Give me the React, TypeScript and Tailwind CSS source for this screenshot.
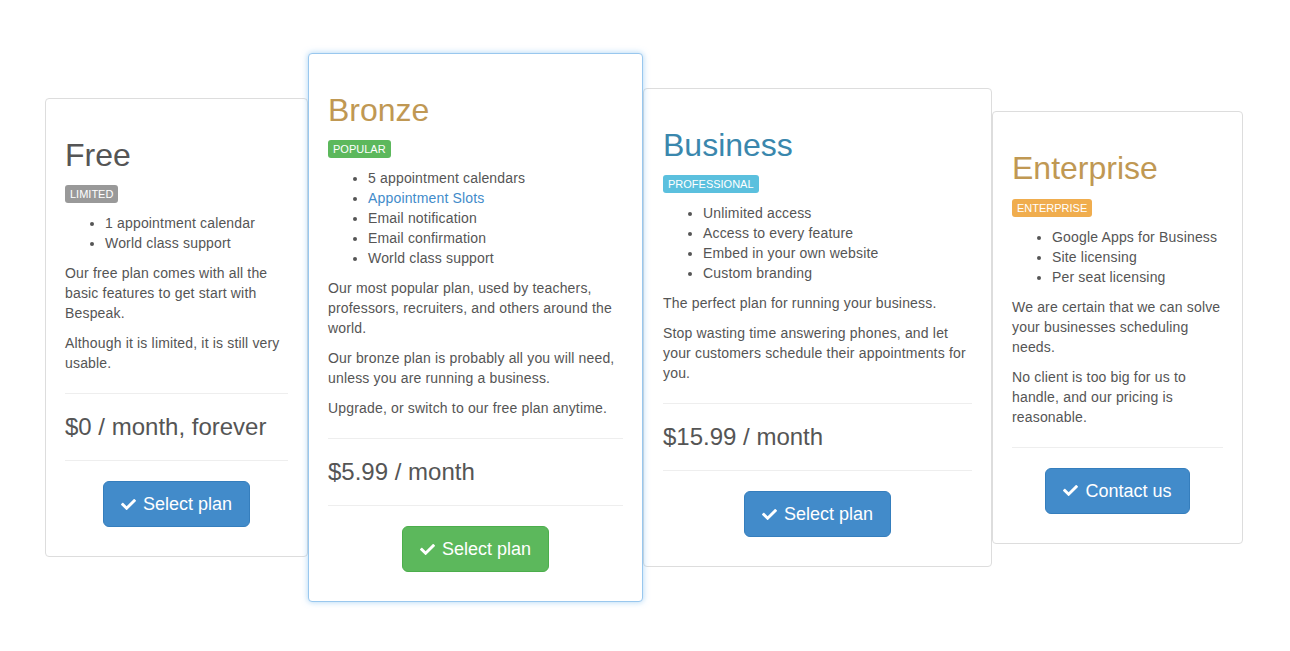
import { FaCheck } from "react-icons/fa";
import type { ReactNode } from "react";

type Plan = {
  name: string;
  titleColor: string;
  badge: string;
  badgeColor: string;
  features: ReactNode[];
  paragraphs: string[];
  price?: string;
  button: string;
  buttonColor: string;
  width: string;
  highlight?: boolean;
};

const plans: Plan[] = [
  {
    name: "Free",
    titleColor: "text-[#555]",
    badge: "Limited",
    badgeColor: "bg-[#999]",
    features: ["1 appointment calendar", "World class support"],
    paragraphs: [
      "Our free plan comes with all the basic features to get start with Bespeak.",
      "Although it is limited, it is still very usable.",
    ],
    price: "$0 / month, forever",
    button: "Select plan",
    buttonColor: "bg-[#428bca] border-[#357ebd]",
    width: "w-[263px]",
  },
  {
    name: "Bronze",
    titleColor: "text-[#c09853]",
    badge: "Popular",
    badgeColor: "bg-[#5cb85c]",
    features: [
      "5 appointment calendars",
      <a href="#" className="text-[#428bca]">
        Appointment Slots
      </a>,
      "Email notification",
      "Email confirmation",
      "World class support",
    ],
    paragraphs: [
      "Our most popular plan, used by teachers, professors, recruiters, and others around the world.",
      "Our bronze plan is probably all you will need, unless you are running a business.",
      "Upgrade, or switch to our free plan anytime.",
    ],
    price: "$5.99 / month",
    button: "Select plan",
    buttonColor: "bg-[#5cb85c] border-[#4cae4c]",
    width: "w-[335px]",
    highlight: true,
  },
  {
    name: "Business",
    titleColor: "text-[#3a87ad]",
    badge: "Professional",
    badgeColor: "bg-[#5bc0de]",
    features: [
      "Unlimited access",
      "Access to every feature",
      "Embed in your own website",
      "Custom branding",
    ],
    paragraphs: [
      "The perfect plan for running your business.",
      "Stop wasting time answering phones, and let your customers schedule their appointments for you.",
    ],
    price: "$15.99 / month",
    button: "Select plan",
    buttonColor: "bg-[#428bca] border-[#357ebd]",
    width: "w-[349px]",
  },
  {
    name: "Enterprise",
    titleColor: "text-[#c09853]",
    badge: "Enterprise",
    badgeColor: "bg-[#f0ad4e]",
    features: ["Google Apps for Business", "Site licensing", "Per seat licensing"],
    paragraphs: [
      "We are certain that we can solve your businesses scheduling needs.",
      "No client is too big for us to handle, and our pricing is reasonable.",
    ],
    button: "Contact us",
    buttonColor: "bg-[#428bca] border-[#357ebd]",
    width: "w-[251px]",
  },
];

const PlanCard = ({ plan }: { plan: Plan }) => {
  return (
    <div
      className={`${plan.width} shrink-0 bg-white rounded-[4px] border px-[19px] pt-[19px] pb-[19px] ${
        plan.highlight
          ? "relative z-10 border-[#99c7ee] shadow-[0_0_6px_rgba(102,175,233,0.55)]"
          : "border-[#ddd]"
      }`}
    >
      <h1
        className={`mt-5 mb-[10px] text-[32px] leading-[1.1] tracking-normal ${plan.titleColor}`}
      >
        {plan.name}
      </h1>
      <div className="h-5 mb-[10px] flex items-end">
        <span
          className={`${plan.badgeColor} text-white uppercase text-[11px] leading-[18px] h-[18px] px-[5px] rounded-[3px] tracking-normal`}
        >
          {plan.badge}
        </span>
      </div>
      <ul className="list-disc pl-10 mb-[10px]">
        {plan.features.map((f, i) => (
          <li key={i}>{f}</li>
        ))}
      </ul>
      {plan.paragraphs.map((p, i) => (
        <p key={i} className="mb-[10px]">
          {p}
        </p>
      ))}
      <hr className="my-5 border-t border-[#eee]" />
      {plan.price && (
        <>
          <h3 className="mt-5 mb-[10px] text-[24px] leading-[1.1] tracking-normal">
            {plan.price}
          </h3>
          <hr className="my-5 border-t border-[#eee]" />
        </>
      )}
      <div className="text-center mb-[10px]">
        <button
          className={`${plan.buttonColor} inline-flex items-center h-[46px] px-[17px] border rounded-[6px] text-white text-[18px] gap-[7px] tracking-normal`}
        >
          <FaCheck size={15} />
          {plan.button}
        </button>
      </div>
    </div>
  );
};

export default function App() {
  return (
    <div className="h-[651px] pt-[4px] bg-white flex items-center text-[#555] text-[14px] leading-5 tracking-[0.17px] font-['Liberation_Sans',Arial,sans-serif]">
      <div className="ml-[45px] flex items-center">
        {plans.map((plan) => (
          <PlanCard key={plan.name} plan={plan} />
        ))}
      </div>
    </div>
  );
}
